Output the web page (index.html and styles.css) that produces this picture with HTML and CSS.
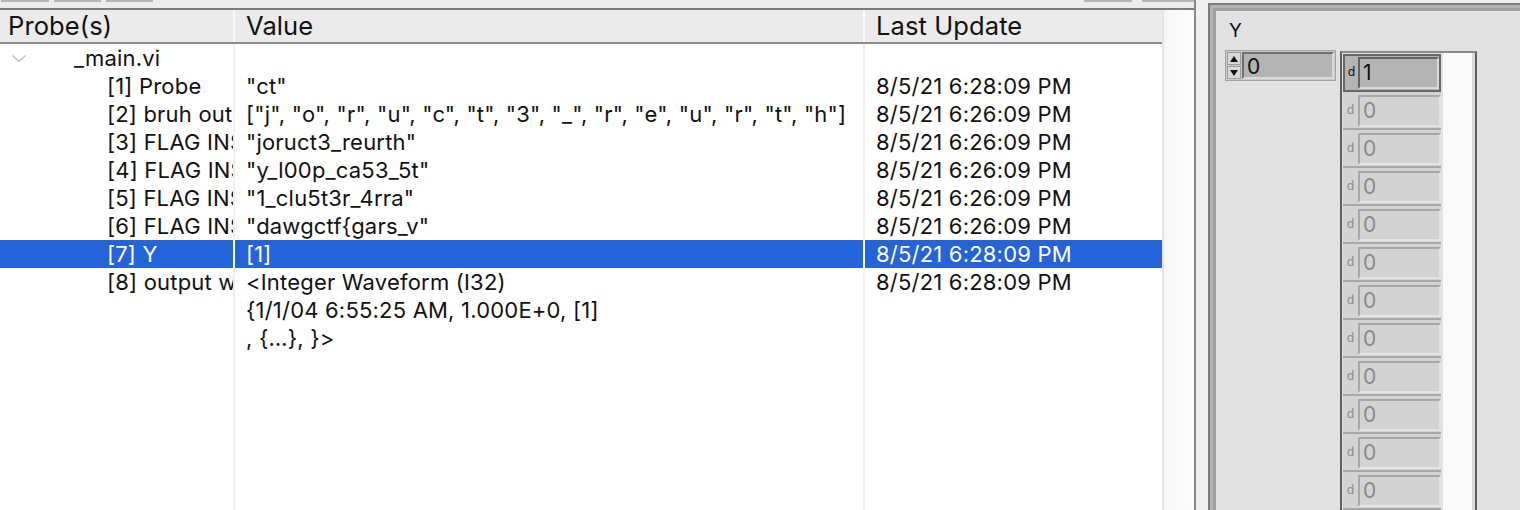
FILE: index.html
```html
<!DOCTYPE html>
<html>
<head>
<meta charset="utf-8">
<link rel="stylesheet" href="styles.css">
</head>
<body>
<div class="app">
  <section class="probes">
    <div class="toolbar">
      <div class="tb-group"><span class="tb-btn w48"></span><span class="tb-btn w47"></span><span class="tb-btn w47"></span></div>
      <div class="tb-group right"><span class="tb-btn w48"></span><span class="tb-btn w52"></span></div>
    </div>
    <div class="main">
      <div class="table">
        <div class="row head">
          <div class="c c1">Probe(s)</div><div class="c c2">Value</div><div class="c c3">Last Update</div>
        </div>
        <div class="row">
          <div class="c c1 vi"><svg class="chev" width="16" height="10" viewBox="0 0 16 10"><polyline points="1.5,1.5 8,7.5 14.5,1.5" fill="none" stroke="#c3c3c3" stroke-width="1.6"/></svg><span>_main.vi</span></div><div class="c c2"></div><div class="c c3"></div>
        </div>
        <div class="row">
          <div class="c c1">[1] Probe</div><div class="c c2">"ct"</div><div class="c c3">8/5/21 6:28:09 PM</div>
        </div>
        <div class="row">
          <div class="c c1">[2] bruh output</div><div class="c c2">["j", "o", "r", "u", "c", "t", "3", "_", "r", "e", "u", "r", "t", "h"]</div><div class="c c3">8/5/21 6:26:09 PM</div>
        </div>
        <div class="row">
          <div class="c c1">[3] FLAG INSIDE</div><div class="c c2">"joruct3_reurth"</div><div class="c c3">8/5/21 6:26:09 PM</div>
        </div>
        <div class="row">
          <div class="c c1">[4] FLAG INSIDE</div><div class="c c2">"y_l00p_ca53_5t"</div><div class="c c3">8/5/21 6:26:09 PM</div>
        </div>
        <div class="row">
          <div class="c c1">[5] FLAG INSIDE</div><div class="c c2">"1_clu5t3r_4rra"</div><div class="c c3">8/5/21 6:26:09 PM</div>
        </div>
        <div class="row">
          <div class="c c1">[6] FLAG INSIDE</div><div class="c c2">"dawgctf{gars_v"</div><div class="c c3">8/5/21 6:26:09 PM</div>
        </div>
        <div class="row sel">
          <div class="c c1">[7] Y</div><div class="c c2">[1]</div><div class="c c3">8/5/21 6:28:09 PM</div>
        </div>
        <div class="row tall">
          <div class="c c1">[8] output waveform</div><div class="c c2">&lt;Integer Waveform (I32)<br>{1/1/04 6:55:25 AM, 1.000E+0, [1]<br>, {…}, }&gt;</div><div class="c c3">8/5/21 6:28:09 PM</div>
        </div>
        <div class="row filler">
          <div class="c c1"></div><div class="c c2"></div><div class="c c3"></div>
        </div>
      </div>
      <div class="vscroll"></div>
    </div>
  </section>
  <section class="front">
    <div class="panel">
      <div class="label">Y</div>
      <div class="controls">
        <div class="numeric">
          <div class="spin">
            <span class="btn"><svg width="8" height="6" viewBox="0 0 8 6"><polygon points="4,0 8,6 0,6" fill="#111"/></svg></span>
            <span class="btn"><svg width="8" height="6" viewBox="0 0 8 6"><polygon points="0,0 8,0 4,6" fill="#111"/></svg></span>
          </div>
          <div class="field">0</div>
        </div>
        <div class="array">
          <div class="cells">
            <div class="cell active"><span class="d">d</span><span class="box">1</span></div>
            <div class="cell"><span class="d">d</span><span class="box">0</span></div>
            <div class="cell"><span class="d">d</span><span class="box">0</span></div>
            <div class="cell"><span class="d">d</span><span class="box">0</span></div>
            <div class="cell"><span class="d">d</span><span class="box">0</span></div>
            <div class="cell"><span class="d">d</span><span class="box">0</span></div>
            <div class="cell"><span class="d">d</span><span class="box">0</span></div>
            <div class="cell"><span class="d">d</span><span class="box">0</span></div>
            <div class="cell"><span class="d">d</span><span class="box">0</span></div>
            <div class="cell"><span class="d">d</span><span class="box">0</span></div>
            <div class="cell"><span class="d">d</span><span class="box">0</span></div>
            <div class="cell"><span class="d">d</span><span class="box">0</span></div>
          </div>
          <div class="blank"></div>
        </div>
      </div>
    </div>
  </section>
</div>
</body>
</html>
```

FILE: styles.css
```css
* { box-sizing: border-box; margin: 0; padding: 0; }
html, body { width: 1520px; height: 510px; overflow: hidden; background: #fff; }
body { font-family: Inter, "Liberation Sans", sans-serif; color: #111; }

.app { display: flex; height: 510px; }

/* left: probe list */
.probes { width: 1196px; flex: none; display: flex; flex-direction: column; border-right: 2px solid #888; background: #fff; }
.toolbar { height: 10px; flex: none; background: #ececec; border-bottom: 2px solid #7b7b7b; display: flex; justify-content: space-between; padding-left: 1px; }
.tb-group { display: flex; gap: 5px; align-items: flex-start; }
.tb-group.right { gap: 10px; }
.tb-btn { height: 2px; background: #b5b5b5; }
.w47 { width: 47px; }
.w48 { width: 48px; }
.w52 { width: 52px; }

.main { flex: 1; display: flex; min-height: 0; }
.table { width: 1162px; flex: none; display: flex; flex-direction: column; }
.row { display: flex; height: 28px; flex: none; font-size: 22px; line-height: 28px; letter-spacing: 0.2px; }
.c { white-space: nowrap; overflow: hidden; border-right: 2px solid #efefef; }
.c1 { width: 235px; flex: none; padding-left: 107px; }
.c2 { width: 630px; flex: none; padding-left: 11px; }
.c3 { flex: 1; padding-left: 11px; border-right: 0; }

.head { height: 34px; background: #ebebeb; border-bottom: 2px solid #8b8b8b; font-size: 25.5px; line-height: 32px; letter-spacing: 0.1px; color: #111; }
.head .c { border-right-color: #fbfbfb; }
.head .c1 { padding-left: 8px; }

.vi { padding-left: 11px; display: flex; align-items: center; }
.chev { flex: none; margin-top: 1px; }
.vi span { margin-left: 47px; }

.sel { background: #2564d8; color: #fff; }
.sel .c { border-right-color: #fff; }
.tall { height: 84px; }
.filler { flex: 1; }

.vscroll { flex: 1; background: linear-gradient(to right, #e4e4e4 0, #e4e4e4 2px, #f6f6f6 2px, #fcfcfc 100%); }

/* right: front panel */
.front { flex: 1; display: flex; background: #eeeeee; padding: 3px 0 0 12px; }
.panel { flex: 1; background: #e1e1e1; border-top: 2px solid #7c7c7c; border-left: 2px solid #7c7c7c; box-shadow: inset 3px 3px 0 #b3b3b3, inset 6px 6px 0 #a0a0a0; padding: 15px 0 0 15px; display: flex; flex-direction: column; }
.label { margin-left: 4px; font-size: 19px; line-height: 22px; color: #111; }
.controls { display: flex; align-items: flex-start; gap: 4px; margin-top: 8px; }

.numeric { width: 111px; height: 31px; flex: none; display: flex; background: #cbcbcb; border: 1px solid #a2a2a2; padding: 1px; gap: 1px; }
.spin { width: 14px; display: flex; flex-direction: column; gap: 1px; }
.btn { flex: 1; display: flex; align-items: center; justify-content: center; background: #d9d9d9; border: 1px solid #9c9c9c; }
.field { flex: 1; background: #b4b4b4; border: 2px solid; border-color: #6f6f6f #d9d9d9 #d9d9d9 #6f6f6f; font-size: 21px; line-height: 25px; padding-left: 3px; color: #111; }

.array { width: 137px; height: 470px; flex: none; margin-top: 1px; display: flex; border: 2px solid #5f5f5f; border-top-color: #8a8a8a; }
.cells { width: 101px; flex: none; display: flex; flex-direction: column; background: #e3e3e3; padding: 1px 0 0 1px; border-right: 2px solid #e3e3e3; }
.blank { flex: 1; background: #fafafa; border-right: 3px solid #d9d9d9; }

.cell { height: 38px; flex: none; display: flex; align-items: flex-start; padding-top: 3px; background: #d3d3d3; border-bottom: 2px solid #a8a8a8; }
.d { width: 15px; flex: none; text-align: center; font-size: 12px; line-height: 30px; color: #8c8c8c; font-family: "DejaVu Sans", sans-serif; }
.box { flex: 1; height: 32px; border: 2px solid; border-color: #a7a7a7 #e4e4e4 #e4e4e4 #a7a7a7; font-size: 21px; line-height: 27px; padding-left: 3px; color: #8a8a8a; }

.cell.active { border: 2px solid #666; padding-top: 1px; background: #b4b4b4; }
.cell.active .d { width: 13px; color: #111; }
.cell.active .box { background: #b4b4b4; border-color: #636363 #dadada #dadada #636363; color: #111; }
```
